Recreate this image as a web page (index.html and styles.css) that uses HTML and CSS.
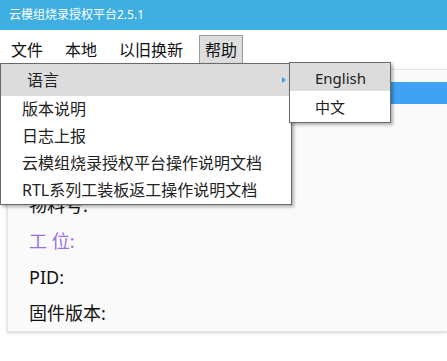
FILE: index.html
```html
<!DOCTYPE html>
<html lang="zh">
<head>
<meta charset="utf-8">
<link rel="stylesheet" href="styles.css">
</head>
<body>
<div class="app">
  <div class="titlebar">云模组烧录授权平台2.5.1</div>
  <div class="menubar">
    <span class="mitem">文件</span>
    <span class="mitem">本地</span>
    <span class="mitem">以旧换新</span>
    <span class="mitem active">帮助</span>
  </div>
  <div class="content">
    <div class="card">
      <div class="card-bar"></div>
      <div class="rows">
        <div class="row">物料号:</div>
        <div class="row purple">工 位:</div>
        <div class="row">PID:</div>
        <div class="row">固件版本:</div>
      </div>
    </div>
  </div>

  <div class="dropdown">
    <div class="ditem first">语言<span class="arrow"></span></div>
    <div class="ditem">版本说明</div>
    <div class="ditem">日志上报</div>
    <div class="ditem">云模组烧录授权平台操作说明文档</div>
    <div class="ditem">RTL系列工装板返工操作说明文档</div>
  </div>
  <div class="submenu">
    <div class="sitem hl">English</div>
    <div class="sitem">中文</div>
  </div>
</div>
</body>
</html>
```

FILE: styles.css
```css
* { box-sizing: border-box; }
html, body {
  margin: 0;
  padding: 0;
  background: #ffffff;
}
body {
  font-family: "Noto Sans", "Noto Sans CJK SC", sans-serif;
  color: #1a1a1a;
}
.app {
  position: relative;
  width: 447px;
  height: 361px;
  overflow: hidden;
  background: #ffffff;
}
.titlebar {
  height: 30px;
  background: #3eafe0;
  color: #ffffff;
  font-family: "Noto Sans", "Noto Sans CJK SC", sans-serif;
  font-size: 12px;
  line-height: 30px;
  padding-left: 9px;
}
.menubar {
  height: 34px;
  padding-top: 5px;
  display: flex;
  align-items: flex-start;
  font-family: "Noto Sans CJK SC", sans-serif;
  font-size: 16px;
}
.mitem {
  height: 29px;
  line-height: 27px;
  padding: 0 5px;
  margin: 0 5px;
  border: 1px solid transparent;
  color: #111;
}
.mitem.active {
  background: #dddddd;
  border-color: #9a9a9a;
  margin-left: 5px;
}
.content {
  padding: 5px 0 0 7px;
}
.card {
  height: 263px;
  background: #fafafa;
  border: 1px solid #e4e4e4;
  border-right: none;
  box-shadow: 0 1px 3px rgba(0,0,0,0.18);
  padding-top: 12px;
}
.card-bar {
  height: 22px;
  background: #3fa2f2;
}
.rows {
  padding: 83px 0 0 21px;
}
.row {
  height: 36px;
  line-height: 36px;
  font-family: "Noto Sans", "Noto Sans CJK SC", sans-serif;
  font-size: 18px;
  color: #111;
}
.row.purple {
  color: #9c6fe4;
}
.dropdown {
  position: absolute;
  left: 0;
  top: 63px;
  width: 292px;
  background: #ffffff;
  border: 1px solid #6a6a6a;
  box-shadow: 2px 2px 3px rgba(0,0,0,0.3);
  font-family: "Noto Sans", "Noto Sans CJK SC", sans-serif;
  font-size: 16px;
  color: #222;
}
.ditem {
  position: relative;
  height: 27px;
  line-height: 27px;
  padding-left: 21px;
}
.ditem.first {
  height: 32px;
  line-height: 32px;
  padding-left: 26px;
  background: #dcdcdc;
}
.arrow {
  position: absolute;
  left: 281px;
  top: 13px;
  width: 0;
  height: 0;
  border-top: 3px solid transparent;
  border-bottom: 3px solid transparent;
  border-left: 4px solid #3a9ee8;
}
.submenu {
  position: absolute;
  left: 289px;
  top: 62px;
  width: 102px;
  height: 61px;
  background: #ffffff;
  border: 1px solid #6a6a6a;
  box-shadow: 2px 2px 3px rgba(0,0,0,0.3);
  font-family: "Noto Sans", "Noto Sans CJK SC", sans-serif;
  font-size: 15px;
  color: #222;
}
.sitem {
  height: 29px;
  line-height: 29px;
  padding-left: 25px;
}
.sitem.hl {
  height: 28px;
  line-height: 30px;
  background: #dcdcdc;
}
.sitem:last-child {
  line-height: 33px;
}
```
